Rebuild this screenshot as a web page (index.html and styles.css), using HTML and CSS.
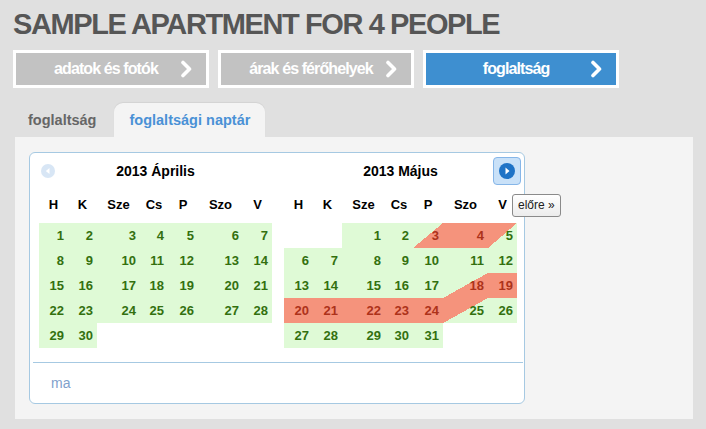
FILE: index.html
```html
<!DOCTYPE html>
<html lang="hu">
<head>
    <meta charset="UTF-8">
    <title>Sample Apartment for 4 People</title>
    <link rel="stylesheet" href="styles.css">
</head>
<body>
    <h1 class="title">SAMPLE APARTMENT FOR 4 PEOPLE</h1>

    <!-- lépések -->
    <div class="steps">
        <a href="#" class="step">
            <span class="step-label">adatok és fotók</span>
            <svg class="chev" width="12" height="18" viewBox="0 0 12 18"><polyline points="3,2.5 9.5,9 3,15.5" fill="none" stroke="#fff" stroke-width="3.6" stroke-linecap="round" stroke-linejoin="round"/></svg>
        </a>
        <a href="#" class="step">
            <span class="step-label">árak és férőhelyek</span>
            <svg class="chev" width="12" height="18" viewBox="0 0 12 18"><polyline points="3,2.5 9.5,9 3,15.5" fill="none" stroke="#fff" stroke-width="3.6" stroke-linecap="round" stroke-linejoin="round"/></svg>
        </a>
        <a href="#" class="step active">
            <span class="step-label">foglaltság</span>
            <svg class="chev" width="12" height="18" viewBox="0 0 12 18"><polyline points="3,2.5 9.5,9 3,15.5" fill="none" stroke="#fff" stroke-width="3.6" stroke-linecap="round" stroke-linejoin="round"/></svg>
        </a>
    </div>

    <!-- fülek -->
    <ul class="tabs">
        <li class="tab">foglaltság</li>
        <li class="tab selected">foglaltsági naptár</li>
    </ul>

    <div class="panel">
        <div class="calendar">
            <span class="nav prev">
                <svg width="14" height="14" viewBox="0 0 14 14"><circle cx="7" cy="7" r="7" fill="#2b7acb"/><polygon points="8.5,4 4.8,7 8.5,10" fill="#fff"/></svg>
            </span>
            <span class="nav next">
                <svg width="16" height="16" viewBox="0 0 16 16"><circle cx="8" cy="8" r="8" fill="#1f73c6"/><polygon points="6.5,4.5 10.5,8 6.5,11.5" fill="#fff"/></svg>
            </span>
            <span class="tooltip">előre »</span>

            <div class="months" id="months"></div>

            <div class="today">ma</div>
        </div>
    </div>

    <script src="script.js"></script>
</body>
</html>
```

FILE: styles.css
```css
body {
    margin: 0;
    padding: 0 13px;
    background-color: #e0e0e0;
    font-family: "Liberation Sans", Arial, sans-serif;
}
.title {
    margin: 7px 0 0;
    font-size: 29px;
    line-height: 34px;
    letter-spacing: -1.4px;
    color: #565656;
}
.steps {
    display: flex;
    gap: 9px;
    margin-top: 9px;
}
.step {
    display: flex;
    align-items: center;
    width: 196px;
    height: 38px;
    box-sizing: border-box;
    border: 3px solid #fff;
    padding: 0 14px 0 16px;
    background-color: #c2c2c2;
    color: #fff;
    text-decoration: none;
    font-size: 16px;
    font-weight: bold;
    letter-spacing: -0.9px;
}
.step.active {
    background-color: #3e8fd0;
}
.step-label {
    flex: 1;
    text-align: center;
}
.chev {
    display: block;
}
.tabs {
    list-style: none;
    display: flex;
    gap: 5px;
    margin: 15px 0 0 2px;
    padding: 0;
}
.tab {
    height: 34px;
    line-height: 34px;
    padding: 0 13px;
    font-size: 14.5px;
    font-weight: bold;
    color: #666;
}
.tab.selected {
    padding: 0 15px;
    background-color: #f4f4f4;
    border-radius: 9px 9px 0 0;
    box-shadow: 0 -1px 1px rgba(0,0,0,0.06);
    color: #4a91d6;
}
.panel {
    margin-left: 2px;
    padding: 15px 14px 15px;
    background-color: #f4f4f4;
}
.calendar {
    position: relative;
    width: 496px;
    box-sizing: border-box;
    padding: 4px 8px 0 9px;
    background-color: #fff;
    border: 1px solid #a6c9e2;
    border-radius: 6px;
}
.months {
    display: flex;
    gap: 12px;
}
.month {
    width: 233px;
}
.month-title {
    height: 29px;
    line-height: 29px;
    text-align: center;
    font-size: 14px;
    font-weight: bold;
    color: #000;
}
.grid {
    display: grid;
    grid-template-columns: 29px 29px 43px 28px 30px 45px 29px;
    grid-template-rows: 37px;
    grid-auto-rows: 25px;
}
.dow {
    line-height: 37px;
    text-align: center;
    font-size: 13px;
    font-weight: bold;
    color: #000;
}
.day {
    line-height: 25px;
    padding-right: 4px;
    text-align: right;
    font-size: 13px;
    font-weight: bold;
}
.day.free {
    background-color: #dffad6;
    color: #33700f;
}
.day.booked {
    background-color: #f5937c;
    color: #ad321a;
}
.day.arrive {
    background: linear-gradient(to bottom right, #dffad6 50%, #f5937c 50%);
    color: #ad321a;
}
.day.leave {
    background: linear-gradient(to bottom right, #f5937c 50%, #dffad6 50%);
    color: #33700f;
}
.today {
    margin: 14px -7px 0 -6px;
    border-top: 1px solid #a6c9e2;
    padding-left: 18px;
    height: 40px;
    line-height: 40px;
    font-size: 14px;
    color: #7fa1cc;
}
.nav {
    position: absolute;
    display: flex;
    align-items: center;
    justify-content: center;
}
.nav.prev {
    left: 11px;
    top: 11px;
    opacity: 0.18;
}
.nav.next {
    left: 463px;
    top: 4px;
    width: 26px;
    height: 26px;
    background-color: #c9e1f8;
    border: 1px solid #86b6e8;
    border-radius: 4px;
}
.tooltip {
    position: absolute;
    left: 482px;
    top: 41px;
    padding: 0 5px;
    height: 21px;
    line-height: 21px;
    font-size: 12px;
    color: #222;
    background: linear-gradient(#fff, #ececec);
    border: 1px solid #8a8a8a;
    border-radius: 3px;
    white-space: nowrap;
}
```

FILE: script.js
```js
const dayNames = ['H', 'K', 'Sze', 'Cs', 'P', 'Szo', 'V'];

// foglalások: napszám -> állapot
const months = [
    { title: '2013 Április', offset: 0, days: 30, state: {} },
    { title: '2013 Május', offset: 2, days: 31, state: {
        3: 'arrive', 4: 'booked', 5: 'leave',
        18: 'arrive', 19: 'booked', 20: 'booked', 21: 'booked',
        22: 'booked', 23: 'booked', 24: 'booked', 25: 'leave'
    } }
];

const wrap = document.getElementById('months');

months.forEach(m => {
    const month = document.createElement('div');
    month.className = 'month';

    const title = document.createElement('div');
    title.className = 'month-title';
    title.textContent = m.title;
    month.appendChild(title);

    const grid = document.createElement('div');
    grid.className = 'grid';

    dayNames.forEach(n => {
        const th = document.createElement('div');
        th.className = 'dow';
        th.textContent = n;
        grid.appendChild(th);
    });

    for (let i = 0; i < m.offset; i++) {
        grid.appendChild(document.createElement('div'));
    }

    for (let d = 1; d <= m.days; d++) {
        const cell = document.createElement('div');
        cell.className = 'day ' + (m.state[d] || 'free');
        cell.textContent = d;
        grid.appendChild(cell);
    }

    month.appendChild(grid);
    wrap.appendChild(month);
});
```
